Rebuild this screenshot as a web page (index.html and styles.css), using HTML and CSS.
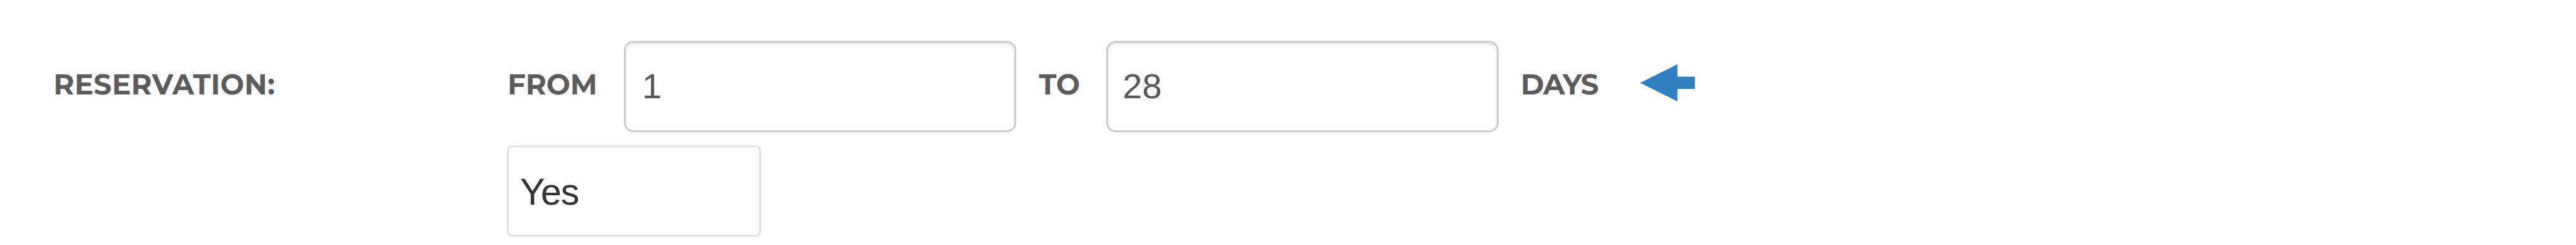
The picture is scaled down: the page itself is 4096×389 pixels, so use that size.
FILE: index.html
```html
<!DOCTYPE html>
<html lang="en">
<head>
<meta charset="utf-8">
<title>Reservation</title>
<link rel="stylesheet" href="styles.css">
</head>
<body>
<form class="setting">
  <div class="label title">RESERVATION:</div>
  <div class="controls">
    <div class="range">
      <span class="label from">FROM</span>
      <div class="field">1</div>
      <span class="label to">TO</span>
      <div class="field end">28</div>
      <span class="label days">DAYS</span>
      <svg class="arrow" viewBox="0 0 87 59"><path d="M0 29.5 59.3 0V19.7H87V39.3H59.3V59Z"/></svg>
    </div>
    <div class="select">Yes</div>
  </div>
</form>
</body>
</html>
```
FILE: styles.css
```css
* { box-sizing: border-box; }
body {
  margin: 0;
  background: #fefefe;
  font-family: "Liberation Sans", Arial, sans-serif;
}
.setting {
  display: flex;
  height: 389px;
  padding: 65px 0 0 84px;
}
.label {
  font: 700 45px/137px Montserrat, Inter, sans-serif;
  color: #5c5c5c;
  white-space: nowrap;
}
.title { width: 722px; padding-left: 1px; letter-spacing: .3px; }
.controls {
  display: flex;
  flex-direction: column;
  gap: 21px;
}
.range {
  display: flex;
  align-items: flex-start;
  height: 145px;
}
.from { width: 186px; padding-left: 1px; }
.to { width: 143px; padding-left: 36px; }
.days { width: 225px; padding-left: 35px; letter-spacing: -1px; }
.field {
  width: 624px;
  height: 145px;
  padding-left: 26px;
  border: 3px solid #ccc;
  border-radius: 15px;
  background: #fefefe;
  box-shadow: inset 0 4px 5px rgba(0, 0, 0, .075);
  font-size: 56px;
  line-height: 138px;
  color: #585858;
}
.end { padding-left: 23px; }
.arrow {
  width: 87px;
  height: 59px;
  margin-top: 37px;
  fill: #3080c2;
}
.select {
  width: 404px;
  height: 145px;
  padding-left: 18px;
  border: 3px solid #e2e2e2;
  border-radius: 8px;
  background: #fefefe;
  font-size: 59px;
  line-height: 143px;
  letter-spacing: -1px;
  color: #333;
}
```
